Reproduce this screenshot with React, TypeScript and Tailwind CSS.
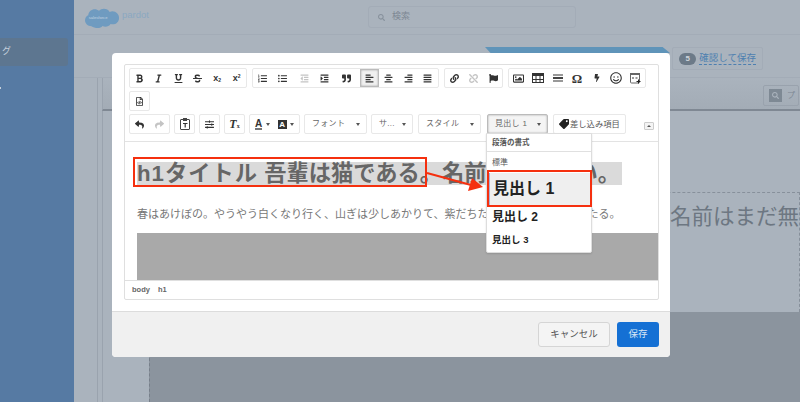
import React from "react";
import { FaBold, FaItalic, FaUnderline, FaStrikethrough, FaListOl, FaListUl, FaOutdent, FaIndent, FaQuoteRight, FaAlignLeft, FaAlignCenter, FaAlignRight, FaAlignJustify, FaLink, FaUnlink, FaFlag, FaRegImage, FaTable, FaBolt, FaRegSmile, FaReply, FaShare, FaSlidersH, FaTag, FaSearch, FaRegFileCode } from "react-icons/fa";

const jp = "font-['Liberation_Sans','Noto_Sans_CJK_JP',sans-serif]";
const Caret = () => <span className="ml-auto w-0 h-0 border-x-[2.5px] border-x-transparent border-t-[3px] border-t-[#555] shrink-0" />;
const Btn = ({ children, active = false, muted = false }: { children: React.ReactNode; active?: boolean; muted?: boolean }) => (
  <span className={`w-[19.5px] h-[18px] shrink-0 flex items-center justify-center ${muted ? "text-[#c4c4c4]" : "text-[#333]"} ${active ? "bg-[#f0f0f0] border border-[#bbb] shadow-[inset_0_0_2px_#999]" : ""}`}>{children}</span>
);
const Group = ({ children, className = "" }: { children: React.ReactNode; className?: string }) => (
  <div className={`flex items-center h-[20px] border border-[#e8e8e8] rounded-[2px] bg-white shrink-0 ${className}`}>{children}</div>
);
const Combo = ({ label, w, active = false }: { label: string; w: string; active?: boolean }) => (
  <div className={`flex items-center h-[20px] pl-[7px] pr-[6px] border rounded-[2px] text-[8px] text-[#666] shrink-0 ${w} ${active ? "border-[#bbb] bg-[#f4f4f4] shadow-[inset_0_0_2px_#999]" : "border-[#e8e8e8] bg-white"}`}>
    <span className="tracking-[0.3px] whitespace-nowrap">{label}</span><Caret />
  </div>
);
const s = 9;

export default function App() {
  return (
    <div className={`relative w-[800px] h-[402px] overflow-hidden flex bg-[#aab3bd] ${jp}`}>
      <aside className="w-[74px] shrink-0 bg-[#567aa3] pt-[38px]">
        <div className="h-[28px] w-[68px] bg-[#5d7690] rounded-r-[3px] flex items-center pl-[2px] text-[9px] text-[#c5d0dc]">
          <span className="whitespace-nowrap">グ</span>
        </div>
        <div className="mt-[21px] w-[1px] h-[2px] bg-[#c5d0dc]" />
      </aside>
      <main className="flex-1 flex flex-col min-w-0">
        <header className="h-[35px] shrink-0 border-b border-[#a3acb7] flex items-center">
          <svg width="35" height="24" viewBox="0 0 38 24" className="ml-[11px] shrink-0"><path d="M7 22c-4 0-7-3-7-6.500 0-2.500 1.300-4.500 3.500-5.500C4 6 7 3.500 10.500 3.500c1.800 0 3.500.7 4.700 1.800C16.500 3.800 18.500 3 20.500 3c2.800 0 5 1.300 6.300 3.500 1-.5 2-.7 3-.7C33.800 5.800 37 9 37 13s-3.200 7-7 7c-.8 0-1.500-.1-2.200-.4-1.200 1.800-3.300 3-5.600 3-1.200 0-2.200-.3-3.200-.8C17.800 23.400 16 24 14 24c-2.800 0-5.200-1-7-2z" fill="#6f9bc0" /><text x="4" y="14.500" fontSize="4.500" fill="#c3d3e0">salesforce</text></svg>
          <span className="text-[9.500px] text-[#8aa8c1] ml-[2px] mb-[4px] w-[26px] shrink-0">pardot</span>
          <div className="ml-[220px] w-[208px] h-[22px] border border-[#a3acb7] rounded-[3px] flex items-center pl-[9px] text-[9px] text-[#7d8793] shrink-0">
            <FaSearch size={7} className="mr-[7px] text-[#87919c]" /> 検索
          </div>
        </header>
        <div className="h-[43px] shrink-0 border-b border-[#a3acb7] flex items-start justify-end pr-[37px] pt-[12px]">
          <span className="text-[#5d94bd] text-[8px] mr-[3px] mt-[6px]">›</span>
          <div className="flex items-center h-[23px] border border-[#a3acb7] rounded-[2px] pl-[6px] pr-[6px] gap-[3px] text-[9.500px] text-[#4d7fb0]">
            <span className="w-[17px] h-[12px] rounded-full bg-[#6c7a88] text-[#cfd5db] text-[8px] flex items-center justify-center font-bold">5</span>
            <span className="border-b border-dashed border-[#4d7fb0] leading-[12px] whitespace-nowrap">確認して保存</span>
          </div>
        </div>
        <div className="flex-1 flex flex-col pl-[23px] min-h-0">
          <div className="flex-1 flex flex-col border-l border-[#9aa3ae] pl-[4px] min-h-0">
            <div className="h-[33px] shrink-0 border-b-[2px] border-[#7f8893] border-l border-l-[#9aa3ae] bg-gradient-to-b from-[#aab3bd] to-[#a3acb6] flex justify-end items-center pr-[1px] pt-[4px]">
              <div className="w-[36px] h-[21px] border border-[#99a2ad] rounded-[2px] flex items-center gap-[5px] pl-[5px] text-[8px] text-[#7d8793] whitespace-nowrap overflow-hidden">
                <span className="w-[13px] h-[13px] bg-[#7e8994] shrink-0 flex items-center justify-center"><FaSearch size={7} className="text-[#aab3bd]" /></span>プ
              </div>
            </div>
            <div className="flex-1 flex flex-col border-l border-[#9aa3ae] pl-[46px] pt-[81px] min-h-0">
              <div className="h-[120px] shrink-0 border-t border-l border-r border-dashed border-[#87909b] flex items-start justify-end text-[21.500px] leading-[24px] text-[#6d7782] whitespace-nowrap">
                <div className="w-[129px] mt-[12px]">名前はまだ無</div>
              </div>
              <div className="flex-1 bg-[#8b949e] border-l border-dashed border-[#777f8a]" />
            </div>
          </div>
        </div>
      </main>

      {/* blue tab edge behind modal */}
      <div className="absolute left-[485px] top-[47px] w-[185px] h-[6px] bg-[#5f94b9] [clip-path:polygon(0_0,96%_0,100%_100%,3%_100%)]" />

      {/* Modal */}
      <div className="absolute left-[112px] top-[53px] w-[558px] h-[304px] bg-white rounded-[4px] flex flex-col">
        <div className="flex-1 pt-[11px] pl-[12px] pr-[11px] min-h-0">
          <div className="h-[236px] border border-[#dfdfdf] rounded-[2px] flex flex-col overflow-hidden">
            <div className="pl-[4px] pt-[3px] h-[77px] border-b-[1.500px] border-[#e3e3e3] shrink-0 flex flex-col gap-[3px]">
              <div className="flex h-[20px]">
                <Group className="w-[118px] justify-center">
                  <Btn><FaBold size={s} /></Btn><Btn><FaItalic size={s} /></Btn><Btn><FaUnderline size={s} /></Btn><Btn><FaStrikethrough size={s} /></Btn>
                  <Btn><span className="text-[9px] font-bold leading-none">x<sub className="text-[5px] font-bold">2</sub></span></Btn>
                  <Btn><span className="text-[9px] font-bold leading-none">x<sup className="text-[5px] font-bold">2</sup></span></Btn>
                </Group>
                <Group className="w-[187px] ml-[5px]">
                  <Btn><FaListOl size={s} /></Btn><Btn><FaListUl size={s} /></Btn><span className="w-[3px] shrink-0" />
                  <Btn muted><FaOutdent size={s} /></Btn><Btn><FaIndent size={s} /></Btn><span className="w-[3px] shrink-0" />
                  <Btn><FaQuoteRight size={s} /></Btn><span className="w-[3px] shrink-0" />
                  <Btn active><FaAlignLeft size={s} /></Btn><Btn><FaAlignCenter size={s} /></Btn><Btn><FaAlignRight size={s} /></Btn><Btn><FaAlignJustify size={s} /></Btn>
                </Group>
                <Group className="w-[59px] ml-[5px] justify-center">
                  <Btn><FaLink size={s} /></Btn><Btn muted><FaUnlink size={s} /></Btn><Btn><FaFlag size={s} /></Btn>
                </Group>
                <Group className="w-[138px] ml-[5px] justify-center">
                  <Btn><FaRegImage size={11} /></Btn>
                  <Btn><svg width="12" height="10" viewBox="0 0 12 10"><rect x="0.500" y="0.500" width="11" height="9" fill="none" stroke="#333" /><rect x="0" y="0" width="12" height="3" fill="#333" /><path d="M4 3v7M8 3v7M0 6.500h12" stroke="#333" /></svg></Btn>
                  <Btn><span className="flex flex-col gap-[1px]"><span className="w-[10px] h-[2px] bg-[#999]" /><span className="w-[10px] h-[2px] bg-[#444]" /><span className="w-[10px] h-[2px] bg-[#999]" /></span></Btn>
                  <Btn><span className="font-['Liberation_Serif'] text-[13px] font-bold leading-none">Ω</span></Btn>
                  <Btn><FaBolt size={8} /></Btn><Btn><FaRegSmile size={12} /></Btn>
                  <Btn><svg width="11" height="11" viewBox="0 0 11 11"><rect x="0.500" y="0.500" width="9" height="9.500" rx="1" fill="none" stroke="#666" /><rect x="0" y="0" width="10" height="2" fill="#666" /><rect x="2" y="4" width="2" height="2" fill="#999" /><rect x="5.500" y="4" width="2" height="2" fill="#999" /><path d="M8.500 6.500v4M6.500 8.500h4" stroke="#222" /></svg></Btn>
                </Group>
              </div>
              <div className="h-[20px]"><Group className="w-[21px] justify-center"><Btn><FaRegFileCode size={s} /></Btn></Group></div>
              <div className="flex h-[20px]">
                <Group className="w-[41px] justify-center"><Btn><FaReply size={s} /></Btn><Btn muted><FaShare size={s} /></Btn></Group>
                <Group className="w-[21px] ml-[4px] justify-center"><Btn><svg width="10" height="12" viewBox="0 0 10 12"><path d="M3 1.500H1a.5.500 0 0 0-.500.500v9a.5.500 0 0 0 .500.500h8a.5.500 0 0 0 .500-.500V2a.5.500 0 0 0-.500-.500H7" fill="none" stroke="#444" /><rect x="3" y="0" width="4" height="3" fill="#444" /><path d="M3 5.500h4.500M5.200 5.500v4" stroke="#333" strokeWidth="1.200" /></svg></Btn></Group>
                <Group className="w-[21px] ml-[4px] justify-center"><Btn><FaSlidersH size={s} /></Btn></Group>
                <Group className="w-[21px] ml-[4px] justify-center"><Btn><span className="font-['Liberation_Serif'] italic font-bold text-[12px] leading-none">T<span className="text-[6px] not-italic">x</span></span></Btn></Group>
                <Group className="w-[51px] ml-[4px] px-[5px] gap-[2px]">
                  <span className="text-[10px] font-bold text-[#333] border-b-[2px] border-[#777] leading-[9px]">A</span><Caret />
                  <span className="w-[9px] h-[9px] ml-[6px] bg-[#333] text-white text-[8px] font-bold leading-[9px] text-center shrink-0">A</span><Caret />
                </Group>
                <div className="ml-[4px]"><Combo label="フォント" w="w-[63px]" /></div>
                <div className="ml-[4px]"><Combo label="サ..." w="w-[42px]" /></div>
                <div className="ml-[5px]"><Combo label="スタイル" w="w-[63px]" /></div>
                <div className="ml-[6px]"><Combo label="見出し 1" w="w-[61px]" active /></div>
                <div className="ml-[5px] flex items-center h-[20px] pl-[5px] border border-[#e8e8e8] rounded-[2px] text-[8.300px] text-[#555] gap-[1px] whitespace-nowrap w-[73px] shrink-0"><FaTag size={10} className="text-[#222] scale-x-[-1]" />差し込み項目</div>
                <span className="ml-[18px] mt-[8px] w-[10px] h-[8px] border border-[#ccc] rounded-[1px] bg-[#f4f4f4] flex items-center justify-center shrink-0"><span className="w-0 h-0 border-x-[2px] border-x-transparent border-b-[2px] border-b-[#555]" /></span>
              </div>
            </div>
            <div className="flex-1 min-h-0 overflow-hidden pl-[12px] text-[#666]">
              <div className="mt-[20px] h-[23px] w-[485px] bg-[#dadada] flex items-center">
                <h1 className="text-[22.250px] leading-[23px] font-bold text-[#666] whitespace-nowrap"><span className="tracking-[1px]">h1タイトル</span> 吾輩は猫である。名前はまだ無い。</h1>
              </div>
              <p className="mt-[21px] text-[11px] leading-[16px] whitespace-nowrap text-[#777]">春はあけぼの。やうやう白くなり行く、山ぎは少しあかりて、紫だちたる雲の細くたなびきたる。</p>
              <div className="mt-[11px] h-[60px] bg-[#a9a9a9]" />
            </div>
            <div className="h-[19px] shrink-0 border-t border-[#dfdfdf] px-[7px] flex items-center gap-[8px] text-[7.500px] font-bold text-[#666]"><span>body</span><span>h1</span></div>
          </div>
        </div>
        <div className="h-[46px] bg-[#f0f0f0] border-t border-[#dcdcdc] rounded-b-[4px] flex items-center justify-end gap-[7px] pr-[11px] shrink-0 text-[9.500px]">
          <button className="w-[72px] h-[25px] rounded-[3px] border border-[#d5d5d5] bg-[#f4f4f4] text-[#555]">キャンセル</button>
          <button className="w-[42px] h-[25px] rounded-[3px] bg-[#1570d4] text-[#d8e6f5]">保存</button>
        </div>
      </div>

      {/* Dropdown */}
      <div className="absolute left-[486px] top-[133px] w-[106px] h-[120px] bg-white border border-[#ddd] rounded-b-[2px] shadow-[0_1px_2px_#0002] text-[#222] flex flex-col">
        <div className="h-[18px] shrink-0 border-b border-[#e0e0e0] pl-[5px] flex items-center text-[7.500px] font-bold text-[#555]">段落の書式</div>
        <div className="h-[21px] shrink-0 pl-[5px] pt-[1px] flex items-center text-[8px] text-[#555]">標準</div>
        <div className="h-[33px] shrink-0 ml-[2px] mr-[1px] pl-[3px] flex items-center bg-[#efefef] border-l border-b border-[#aab0d8] text-[16px] font-bold">見出し 1</div>
        <div className="h-[22px] shrink-0 pl-[5px] flex items-center text-[12px] font-bold">見出し 2</div>
        <div className="h-[24px] shrink-0 pl-[5px] flex items-center text-[9.500px] font-bold">見出し 3</div>
      </div>

      {/* Annotations */}
      <div className="absolute left-[133px] top-[157px] w-[294px] h-[30px] border-[2px] border-[#f5300f]" />
      <div className="absolute left-[487px] top-[170px] w-[105px] h-[37px] border-[2px] border-[#f5300f]" />
      <svg className="absolute left-[425px] top-[165px]" width="62" height="30" viewBox="0 0 62 30"><path d="M2 8 L46 20" stroke="#f5300f" strokeWidth="2" /><path d="M58 22 L47 13 L43 26 Z" fill="#f5300f" /></svg>
    </div>
  );
}
